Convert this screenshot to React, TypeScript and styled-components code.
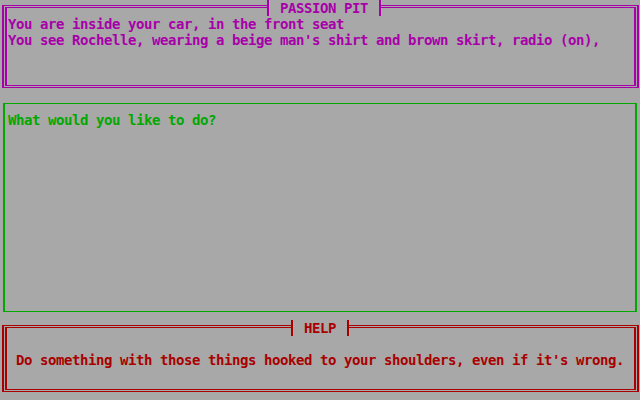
import React from "react";
import styled, { createGlobalStyle } from "styled-components";

const palette = {
  gray: "#a8a8a8",
  magenta: "#a800a8",
  green: "#00a800",
  red: "#a80000",
};

const CELL_H = 16;

const GlobalStyle = createGlobalStyle`
  html, body {
    margin: 0;
    padding: 0;
    background: ${palette.gray};
  }
`;

const Screen = styled.div`
  width: 640px;
  height: 400px;
  display: flex;
  flex-direction: column;
  background: ${palette.gray};
  font-family: "DejaVu Sans Mono", "Liberation Mono", monospace;
  font-size: 14px;
  font-weight: bold;
  line-height: ${CELL_H}px;
  letter-spacing: -0.43px;
  overflow: hidden;
`;

const Panel = styled.section<{ $rows: number; $color: string; $double?: boolean }>`
  position: relative;
  box-sizing: border-box;
  height: ${({ $rows }) => $rows * CELL_H}px;
  display: flex;
  flex-direction: column;
  color: ${({ $color }) => $color};
  padding: ${({ $double }) => ($double ? "5px 1px 8px 2px" : "7px 3px 8px 3px")};
`;

const Frame = styled.div<{ $pad?: string }>`
  flex: 1;
  display: flex;
  flex-direction: column;
  box-sizing: border-box;
  border-style: solid;
  border-color: currentColor;
  border-width: 1px 2px;
  padding: ${({ $pad }) => $pad ?? "0"};
`;

const Title = styled.div<{ $left: number; $width: number }>`
  position: absolute;
  top: 0;
  left: ${({ $left }) => $left}px;
  width: ${({ $width }) => $width}px;
  height: ${CELL_H}px;
  box-sizing: border-box;
  display: flex;
  justify-content: center;
  background: ${palette.gray};
  border-left: 2px solid currentColor;
  border-right: 2px solid currentColor;
  white-space: pre;
`;

const Line = styled.div`
  height: ${CELL_H}px;
  white-space: pre;
`;

export default function App() {
  return (
    <>
      <GlobalStyle />
      <Screen>
        <Panel $rows={6} $color={palette.magenta} $double>
          <Frame $pad="1px">
            <Frame $pad="8px 0 0 1px">
              <Line>You are inside your car, in the front seat</Line>
              <Line>You see Rochelle, wearing a beige man's shirt and brown skirt, radio (on),</Line>
            </Frame>
          </Frame>
          <Title $left={267} $width={114}>PASSION PIT</Title>
        </Panel>

        <Panel $rows={14} $color={palette.green}>
          <Frame $pad="8px 0 0 3px">
            <Line>What would you like to do?</Line>
          </Frame>
        </Panel>

        <Panel $rows={5} $color={palette.red} $double>
          <Frame $pad="1px">
            <Frame $pad="24px 0 0 9px">
              <Line>Do something with those things hooked to your shoulders, even if it's wrong.</Line>
            </Frame>
          </Frame>
          <Title $left={291} $width={58}>HELP</Title>
        </Panel>
      </Screen>
    </>
  );
}
